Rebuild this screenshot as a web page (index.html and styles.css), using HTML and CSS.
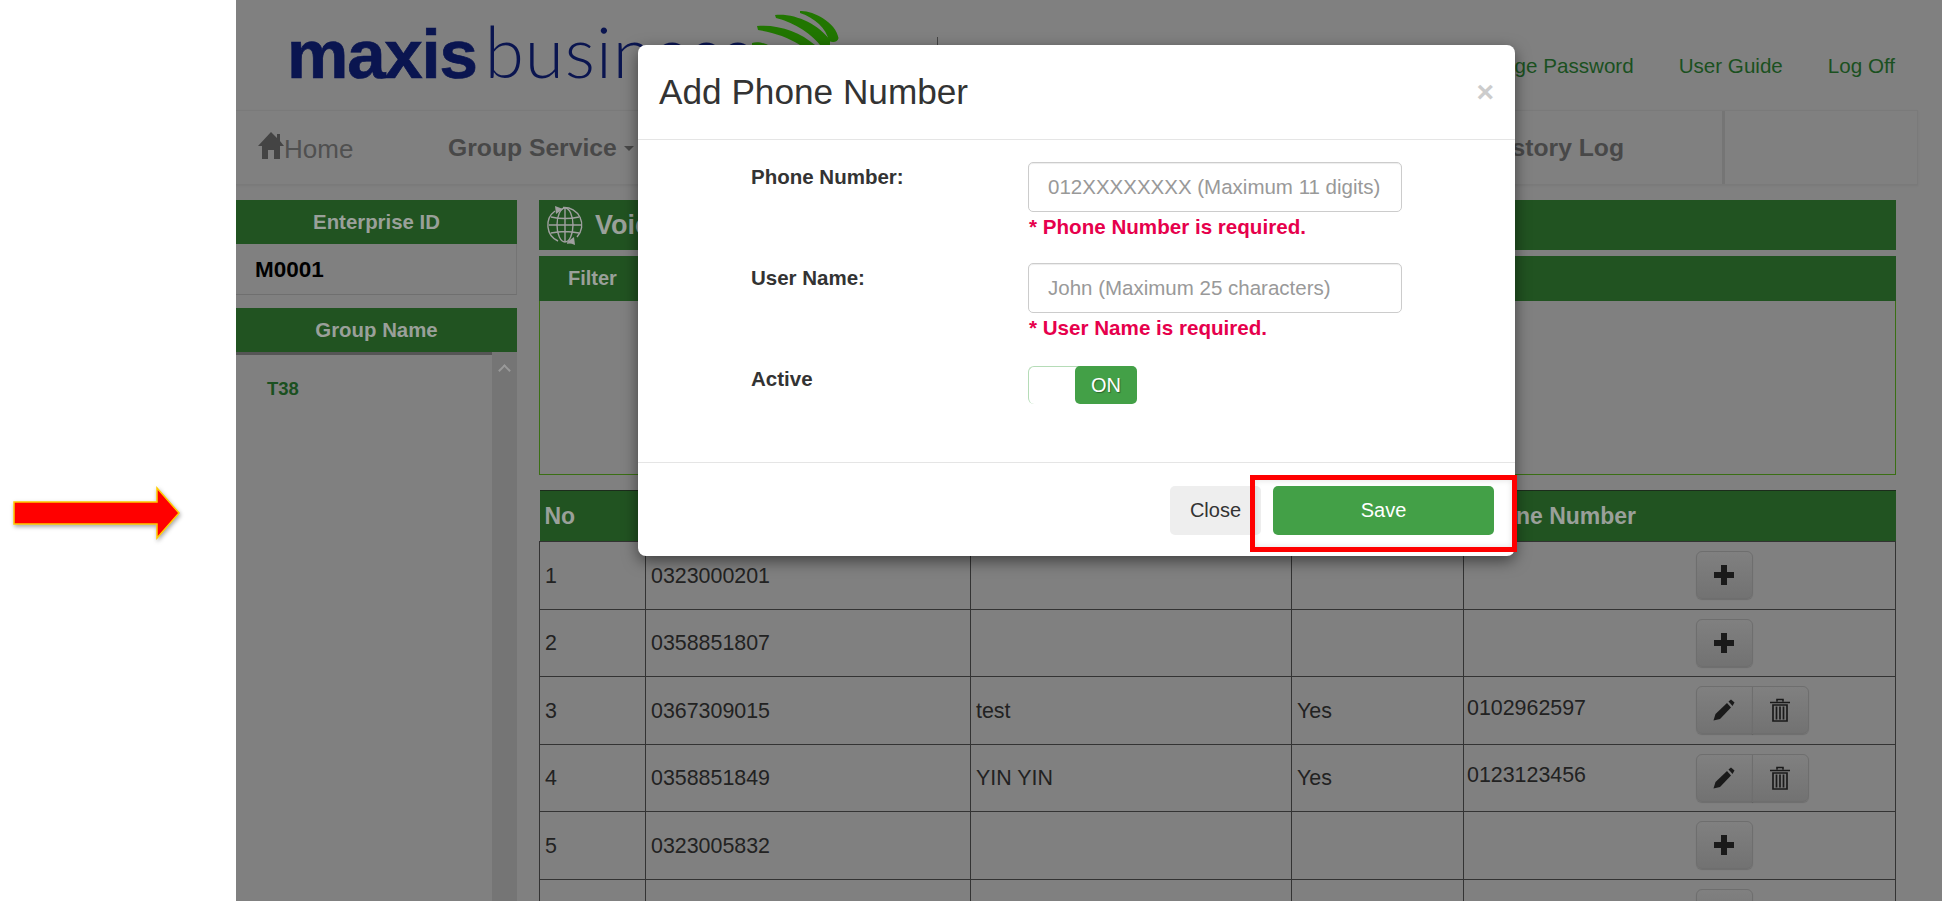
FILE: index.html
```html
<!DOCTYPE html>
<html>
	<head>
		<meta charset="UTF-8">
		<title>Add Phone Number</title>
		<link rel="stylesheet" href="styles.css">
	</head>
	<body>
		<svg class="hintArrow" width="172" height="56" viewBox="0 0 172 56">
			<path d="M4 17H147V3L169 28L147 53V39H4Z" fill="#f00" stroke="#fc0" stroke-width="1.5"/>
		</svg>

		<div class="page">
			<div class="topHeader">
				<div class="logo">
					<span class="logoBold">maxis</span><span class="logoThin">business</span>
					<svg class="swoosh" width="92" height="37" viewBox="750 8 92 37">
						<g fill="#217600">
							<path d="M800 11C812 10 836 22 838.5 38C838 42 833 43 829 41C826 28 815 18 800 13Z"/>
							<path d="M775 15C795 13 818 24 830 40V45H820C810 32 790 21 776 18Z"/>
							<path d="M757 26C778 24 800 32 815 45H800C788 37 772 32 758 30Z"/>
							<path d="M752 43C757 41 764 43 768 45H752Z"/>
						</g>
					</svg>
				</div>
				<div class="headerLine"></div>
				<div class="topLinks">
					<a href="">Change Password</a>
					<a href="">User Guide</a>
					<a href="">Log Off</a>
				</div>
			</div>

			<div class="nav">
				<a class="navHome" href="">
					<svg width="26" height="27" viewBox="0 0 26 27"><path d="M13 0L19 6V2H22V9L26 14H22V27H16V18H10V27H4V14H0Z" fill="#444"/></svg><span class="homeText">Home</span>
				</a>
				<a class="navItem" href="">Group Service <span class="caret"></span></a>
				<div class="navSpace"></div>
				<a class="navItem navLog" href="">History Log</a>
				<div class="navEnd"></div>
			</div>

			<div class="content">
				<div class="side">
					<div class="greenHead">Enterprise ID</div>
					<div class="enterprise">M0001</div>
					<div class="greenHead groupHead">Group Name</div>
					<div class="groupList">
						<div class="groupItems"><a href="">T38</a></div>
						<div class="scrollBar"><span class="scrollUp"></span></div>
					</div>
				</div>

				<div class="main">
					<div class="titleBar">
						<svg width="38" height="42" viewBox="0 0 38 42">
							<g fill="none" stroke="#a0a0a0" stroke-width="1.4">
								<path d="M9 7A17.5 17.5 0 0 0 12 37M17 3.5A17.5 17.5 0 0 1 31 33M27 38A17.5 17.5 0 0 1 21 39"/>
								<ellipse cx="19" cy="21" rx="8" ry="17"/>
								<path d="M19 4V38M3 21H35M5 13C14 15 24 15 33 13M5 29C14 27 24 27 33 29"/>
							</g>
							<path d="M9 2L17 5L10 10ZM29 41L21 38L28 33Z" fill="#a0a0a0"/>
						</svg>
						<span>Voice</span>
					</div>
					<div class="filterBar"><span>Filter</span></div>
					<div class="filterBox"></div>

					<table class="phoneTable">
						<colgroup>
							<col class="colNo"><col class="colPhone"><col class="colName"><col class="colActive"><col class="colFwd"><col class="colBtn">
						</colgroup>
						<thead>
							<tr><th>No</th><th></th><th></th><th></th><th class="fwdHead" colspan="2">Phone Number</th></tr>
						</thead>
						<tbody>
							<tr>
								<td>1</td><td>0323000201</td><td></td><td></td><td class="fwd"></td>
								<td class="btnCell"><span class="btnGroup"><a class="iconBtn" href=""><svg width="20" height="20"><use href="#plus"/></svg></a></span></td>
							</tr>
							<tr>
								<td>2</td><td>0358851807</td><td></td><td></td><td class="fwd"></td>
								<td class="btnCell"><span class="btnGroup"><a class="iconBtn" href=""><svg width="20" height="20"><use href="#plus"/></svg></a></span></td>
							</tr>
							<tr>
								<td>3</td><td>0367309015</td><td>test</td><td>Yes</td><td class="fwd"><span>0102962597</span></td>
								<td class="btnCell"><span class="btnGroup"><a class="iconBtn" href=""><svg width="22" height="22"><use href="#pencil"/></svg></a><a class="iconBtn" href=""><svg width="20" height="24"><use href="#trash"/></svg></a></span></td>
							</tr>
							<tr>
								<td>4</td><td>0358851849</td><td>YIN YIN</td><td>Yes</td><td class="fwd"><span>0123123456</span></td>
								<td class="btnCell"><span class="btnGroup"><a class="iconBtn" href=""><svg width="22" height="22"><use href="#pencil"/></svg></a><a class="iconBtn" href=""><svg width="20" height="24"><use href="#trash"/></svg></a></span></td>
							</tr>
							<tr>
								<td>5</td><td>0323005832</td><td></td><td></td><td class="fwd"></td>
								<td class="btnCell"><span class="btnGroup"><a class="iconBtn" href=""><svg width="20" height="20"><use href="#plus"/></svg></a></span></td>
							</tr>
							<tr>
								<td></td><td></td><td></td><td></td><td class="fwd"></td>
								<td class="btnCell"><span class="btnGroup"><a class="iconBtn" href=""><svg width="20" height="20"><use href="#plus"/></svg></a></span></td>
							</tr>
						</tbody>
					</table>
				</div>
			</div>
		</div>

		<div class="modal">
			<div class="modalHead">
				<h4>Add Phone Number</h4>
				<span class="closeX">×</span>
			</div>
			<div class="modalBody">
				<div class="formRow">
					<label>Phone Number:</label>
					<div>
						<input type="text" placeholder="012XXXXXXXX (Maximum 11 digits)">
						<div class="errorText">* Phone Number is required.</div>
					</div>
				</div>
				<div class="formRow">
					<label>User Name:</label>
					<div>
						<input type="text" placeholder="John (Maximum 25 characters)">
						<div class="errorText">* User Name is required.</div>
					</div>
				</div>
				<div class="formRow">
					<label>Active</label>
					<div class="toggle"><span class="toggleOn">ON</span></div>
				</div>
			</div>
			<div class="modalFoot">
				<button class="btnClose">Close</button>
				<button class="btnSave">Save</button>
			</div>
			<div class="redBox"></div>
		</div>

		<svg class="iconDefs" width="0" height="0">
			<symbol id="plus" viewBox="0 0 20 20"><path d="M7 0H13V7H20V13H13V20H7V13H0V7H7Z" fill="#1a1a1a"/></symbol>
			<symbol id="pencil" viewBox="0 0 22 22">
				<path d="M0.5 21.5L2.5 15L14 4L18 8.5L7 20Z" fill="#1a1a1a"/>
				<path d="M15.5 2.5L18 0.5L21.5 3.5L19.5 7Z" fill="#1a1a1a"/>
			</symbol>
			<symbol id="trash" viewBox="0 0 20 24">
				<path d="M7 3.5V1.5H13V3.5M0 4.5H20" fill="none" stroke="#1a1a1a" stroke-width="1.6"/>
				<path d="M3 7H17V23H3ZM6.5 8.5V21.5M10 8.5V21.5M13.5 8.5V21.5" fill="none" stroke="#1a1a1a" stroke-width="1.7"/>
			</symbol>
		</svg>
	</body>
</html>
```

FILE: styles.css
```css
*{
	margin: 0px;
	padding: 0px;
	box-sizing: border-box;
}
html,body{
	height: 901px;
	overflow: hidden;
}
body{
	position: relative;
	background: #fff;
	font-family: "Liberation Sans", Arial, sans-serif;
	color: #222;
}
a{
	text-decoration: none;
}
.iconDefs{
	display: block;
}
.hintArrow{
	position: absolute;
	left: 10px;
	top: 485px;
	filter: drop-shadow(1px 2px 2px rgba(0,0,0,.35));
}

/* dimmed page behind the dialog */
.page{
	margin-left: 236px;
	height: 901px;
	overflow: hidden;
	background: #808080;
}
.topHeader{
	display: flex;
	height: 110px;
	position: relative;
}
.logo{
	position: relative;
	margin-left: 51px;
	height: 110px;
	line-height: 101px;
	white-space: nowrap;
	color: #0a1550;
}
.logoBold{
	font-size: 69px;
	font-weight: bold;
	letter-spacing: -1.2px;
	-webkit-text-stroke: .7px #0a1550;
}
.logoThin{
	font-family: Lato, sans-serif;
	font-size: 71px;
	font-weight: 300;
	letter-spacing: 1px;
	margin-left: 8px;
}
.swoosh{
	position: absolute;
	left: 463px;
	top: 8px;
}
.headerLine{
	position: absolute;
	left: 701px;
	top: 37px;
	width: 1px;
	height: 50px;
	background: #444;
}
.topLinks{
	margin-left: auto;
	display: flex;
	gap: 45px;
	padding: 54px 47px 0 0;
	font-size: 20.6px;
	line-height: 24px;
}
.topLinks a{
	color: #1a5020;
}
.nav{
	display: flex;
	align-items: center;
	width: 1682px;
	height: 75px;
	border: 1px solid #7a7a7a;
	border-left: 0;
	box-shadow: 0 1px 2px rgba(0,0,0,.06);
}
.navHome{
	display: flex;
	align-items: center;
	width: 212px;
	padding-left: 22px;
	font-size: 26px;
	color: #505050;
}
.navHome svg{
	margin-top: -4px;
}
.homeText{
	position: relative;
	top: 2px;
}
.navItem{
	font-size: 24.7px;
	font-weight: bold;
	color: #484848;
}
.caret{
	display: inline-block;
	border-top: 5px solid #484848;
	border-left: 5px solid transparent;
	border-right: 5px solid transparent;
	vertical-align: middle;
}
.navSpace{
	flex: 1;
}
.navLog{
	padding-right: 98px;
}
.navEnd{
	width: 195px;
	height: 100%;
	border-left: 3px solid #757575;
}

.content{
	display: flex;
	gap: 22px;
	padding: 15px 47px 0 0;
}
.side{
	width: 281px;
	flex-shrink: 0;
}
.greenHead{
	height: 44px;
	line-height: 44px;
	background: #215321;
	color: #9aa09a;
	font-size: 20.4px;
	font-weight: bold;
	text-align: center;
}
.enterprise{
	height: 51px;
	line-height: 52px;
	padding-left: 19px;
	color: #000;
	font-size: 22.5px;
	font-weight: bold;
	border-right: 1px solid #747474;
	border-bottom: 1px solid #6f6f6f;
}
.groupHead{
	margin-top: 13px;
}
.groupList{
	display: flex;
	height: 560px;
}
.groupItems{
	flex: 1;
	padding-top: 23px;
	border-top: 3px solid #555;
	font-size: 18.5px;
	font-weight: bold;
}
.groupItems a{
	margin-left: 31px;
	color: #1a5020;
}
.scrollBar{
	width: 25px;
	background: #757575;
	display: flex;
	justify-content: center;
}
.scrollUp{
	width: 9px;
	height: 9px;
	margin-top: 14px;
	border-top: 2px solid #999;
	border-left: 2px solid #999;
	transform: rotate(45deg);
}

.main{
	flex: 1;
}
.titleBar{
	display: flex;
	align-items: center;
	gap: 11px;
	height: 50px;
	padding-left: 7px;
	background: #215321;
	color: #9aa09a;
	font-size: 27px;
	font-weight: bold;
}
.filterBar{
	height: 45px;
	margin-top: 6px;
	padding-left: 29px;
	line-height: 44px;
	background: #215321;
	color: #9aa09a;
	font-size: 20px;
	font-weight: bold;
}
.filterBox{
	height: 174px;
	border: 1px solid #3a6f14;
	border-top: 0;
}
.phoneTable{
	width: 1356px;
	margin-top: 15px;
	table-layout: fixed;
	border-collapse: collapse;
	font-size: 21.4px;
}
.colNo{ width: 106px; }
.colPhone{ width: 325px; }
.colName{ width: 321px; }
.colActive{ width: 172px; }
.colFwd{ width: 227px; }
.colBtn{ width: 205px; }
.phoneTable th{
	height: 51px;
	padding-left: 5px;
	background: #215321;
	border-top: 1px solid #1c2c1c;
	color: #9aa09a;
	font-size: 23px;
	text-align: left;
}
.phoneTable th.fwdHead{
	padding-left: 9px;
}
.phoneTable td{
	height: 67.5px;
	padding: 2px 0 0 5px;
	border: 1px solid #333;
}
.phoneTable td.fwd{
	padding-left: 3px;
	border-right: 0;
}
.phoneTable td.fwd span{
	position: relative;
	top: -3px;
}
.phoneTable td.btnCell{
	border-left: 0;
	vertical-align: top;
	padding-top: 9px;
}
.btnGroup{
	display: inline-flex;
}
.iconBtn{
	display: flex;
	align-items: center;
	justify-content: center;
	width: 57px;
	height: 48px;
	background: linear-gradient(#808080, #727272);
	border: 1px solid #6e6e6e;
	border-radius: 6px;
	box-shadow: 0 1px 1px rgba(0,0,0,.15);
}
.iconBtn + .iconBtn{
	margin-left: -1px;
	border-radius: 0 6px 6px 0;
}
.iconBtn:has(+ .iconBtn){
	border-radius: 6px 0 0 6px;
}

/* dialog */
.modal{
	position: absolute;
	left: 638px;
	top: 45px;
	width: 877px;
	height: 511px;
	background: #fff;
	border-radius: 8px;
	box-shadow: 0 5px 15px rgba(0,0,0,.5);
}
.modalHead{
	display: flex;
	justify-content: space-between;
	align-items: center;
	height: 95px;
	padding: 0 21px 1px 21px;
	border-bottom: 1px solid #e5e5e5;
}
.modalHead h4{
	font-size: 35.2px;
	font-weight: normal;
	color: #333;
}
.closeX{
	font-size: 30px;
	font-weight: bold;
	color: #ccc;
}
.modalBody{
	height: 322px;
	padding-top: 22px;
}
.formRow{
	display: grid;
	grid-template-columns: 277px 374px;
	padding-left: 113px;
	height: 101px;
}
.formRow label{
	font-size: 20.5px;
	font-weight: bold;
	color: #333;
	line-height: 30px;
}
.formRow input{
	display: block;
	width: 374px;
	height: 50px;
	padding: 0 19px;
	border: 1px solid #ccc;
	border-radius: 5px;
	box-shadow: inset 0 1px 1px rgba(0,0,0,.075);
	font-family: "Liberation Sans", Arial, sans-serif;
	font-size: 20.5px;
}
.formRow input::placeholder{
	color: #999;
	opacity: 1;
}
.errorText{
	margin-top: 3px;
	padding-left: 1px;
	color: #e6004c;
	font-size: 20.6px;
	font-weight: bold;
	line-height: 24px;
}
.toggle{
	display: flex;
	justify-content: flex-end;
	width: 109px;
	height: 38px;
	margin-top: 2px;
	border: 1px solid #b5dcb7;
	border-right: 0;
	border-bottom: 0;
	border-radius: 6px 6px 0 6px;
}
.toggleOn{
	width: 62px;
	height: 38px;
	margin-top: -1px;
	line-height: 38px;
	background: #43a047;
	border-radius: 5px;
	color: #fff;
	font-size: 20px;
	text-align: center;
	text-shadow: 1px 1px 1px rgba(0,0,0,.35);
}
.modalFoot{
	display: flex;
	justify-content: flex-end;
	gap: 12px;
	padding: 23px 21px 0 0;
	border-top: 1px solid #e5e5e5;
}
.modalFoot button{
	height: 49px;
	border: 0;
	border-radius: 5px;
	font-family: "Liberation Sans", Arial, sans-serif;
	font-size: 20px;
}
.btnClose{
	width: 91px;
	background: #eee;
	color: #333;
}
.btnSave{
	width: 221px;
	background: #43a047;
	color: #fff;
}
.redBox{
	position: absolute;
	left: 612px;
	top: 430px;
	width: 267px;
	height: 77px;
	border: 5px solid #f00;
	box-shadow: inset 0 0 6px rgba(0,0,0,.12);
}
```
